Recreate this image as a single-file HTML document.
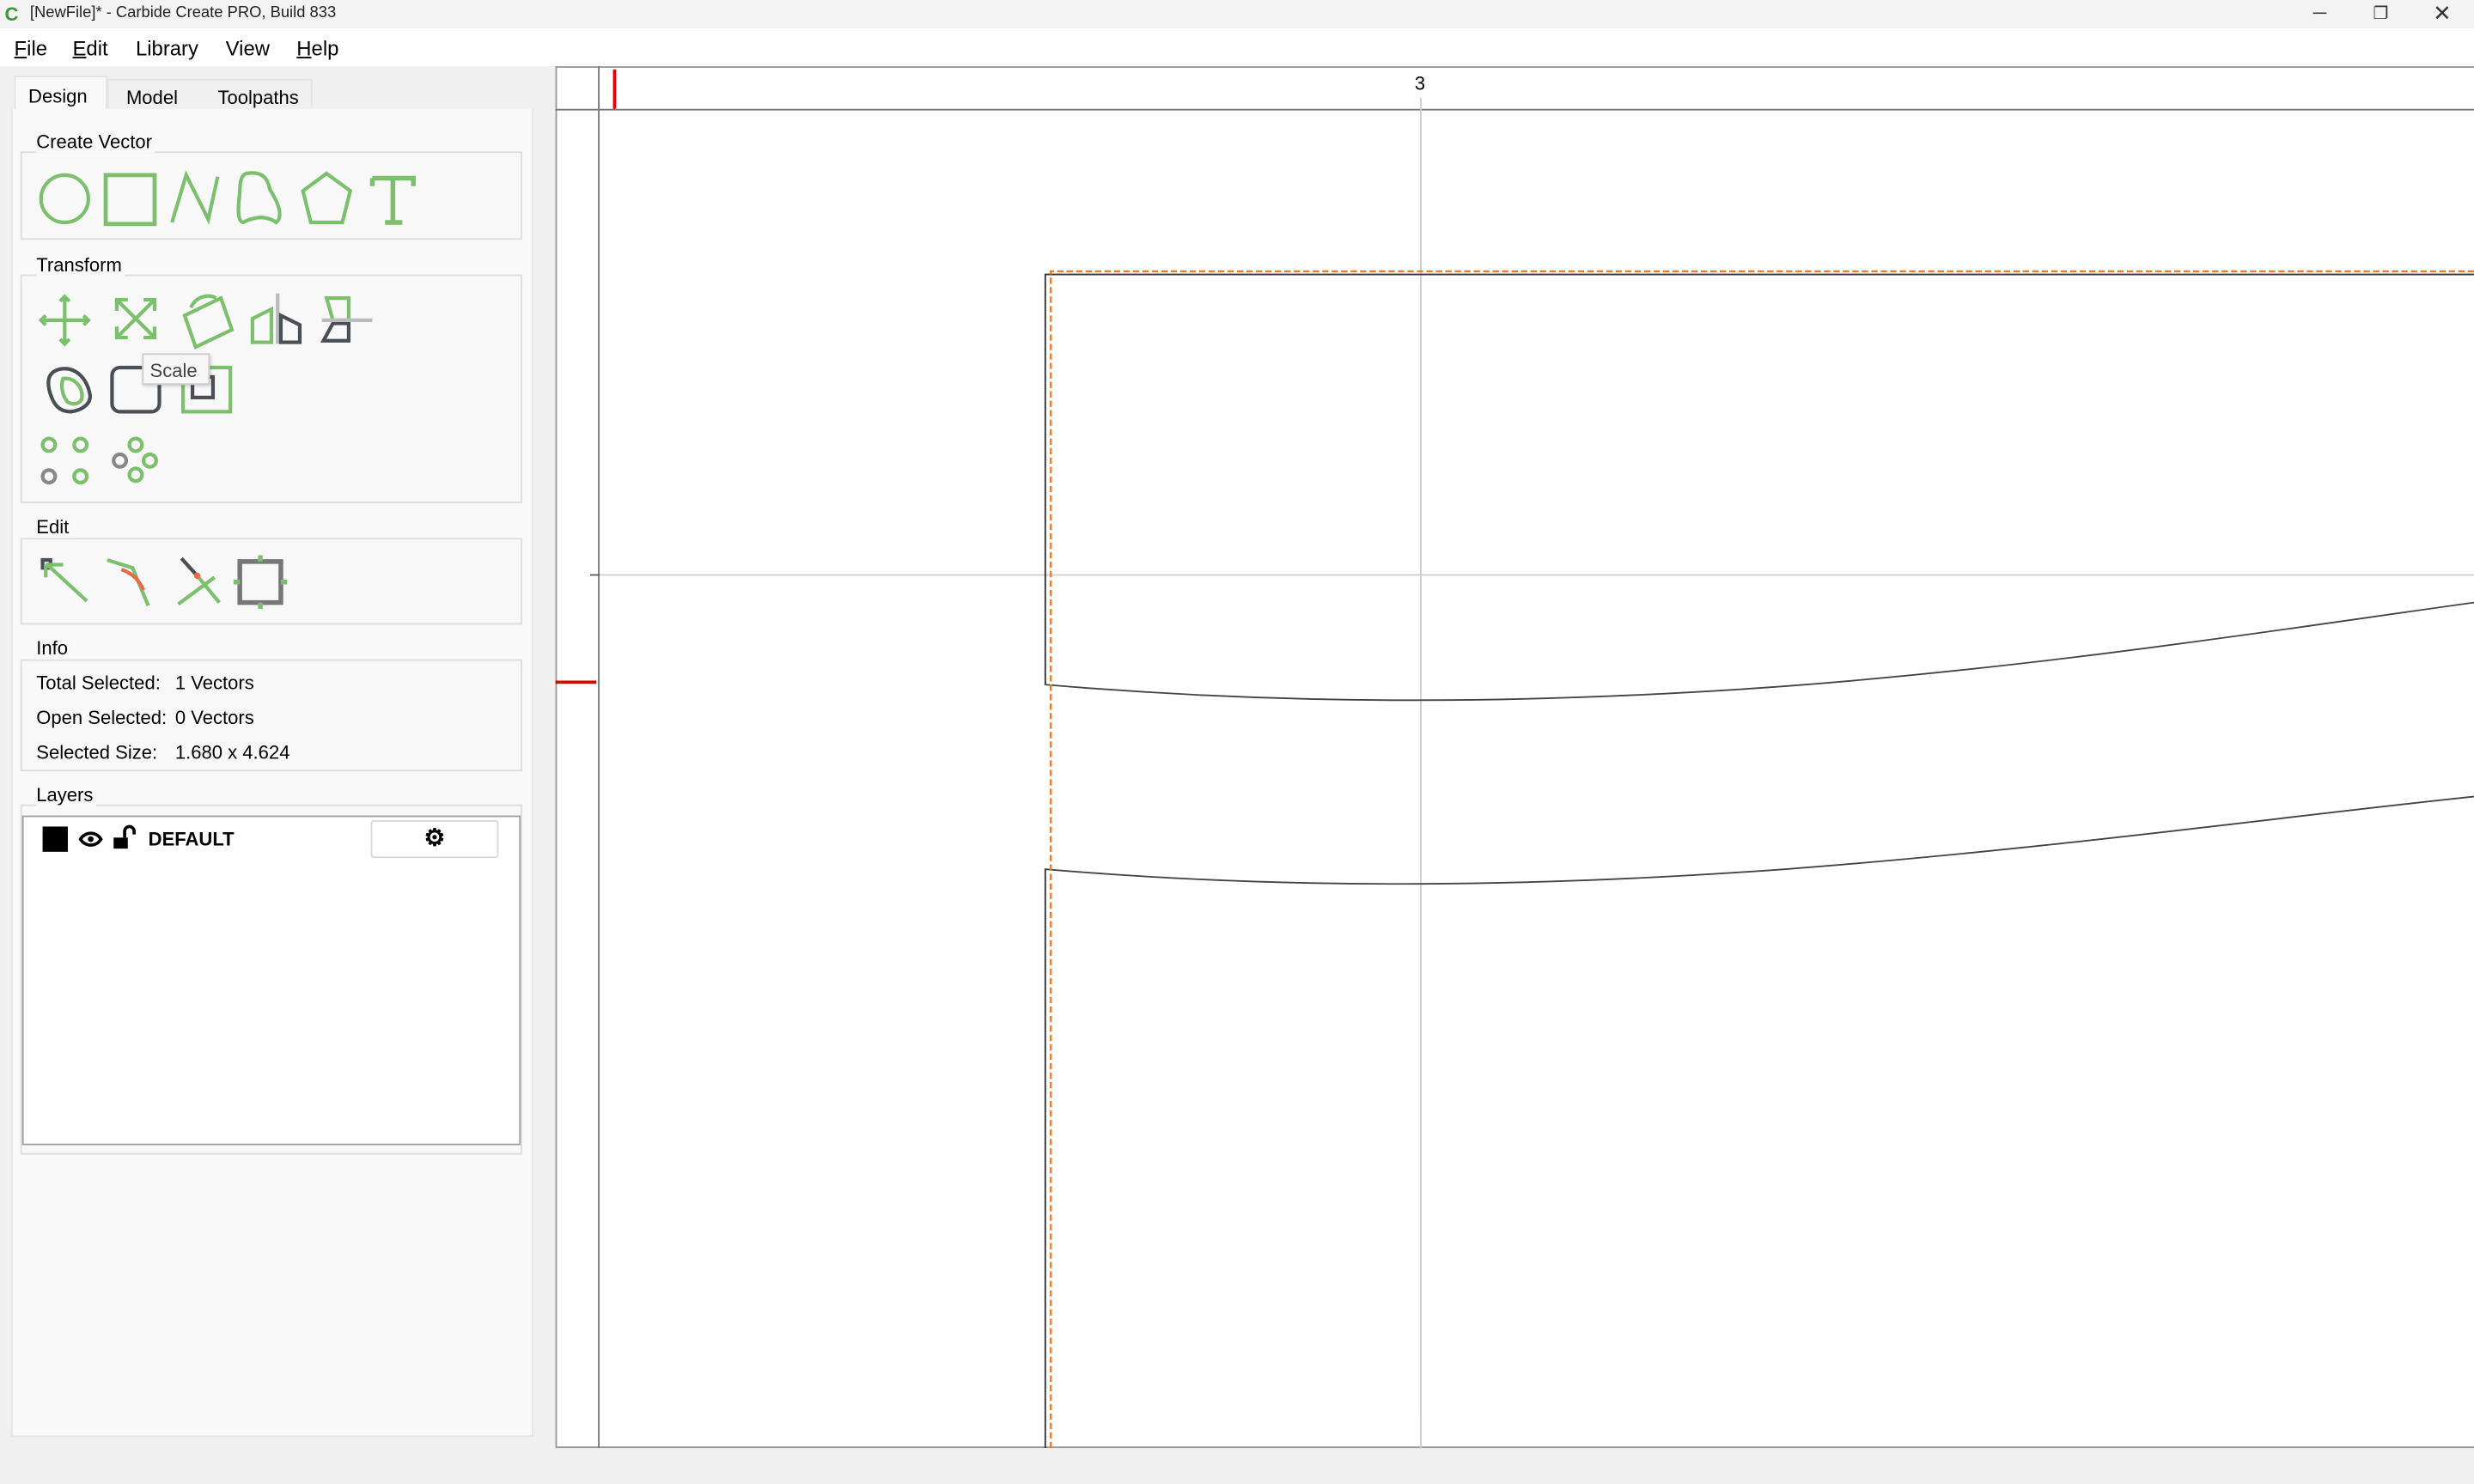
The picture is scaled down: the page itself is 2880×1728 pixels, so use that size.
<!DOCTYPE html>
<html><head><meta charset="utf-8"><style>
*{margin:0;padding:0;box-sizing:border-box}
body{width:2880px;height:1728px;overflow:hidden;background:#f0f0f0;font-family:"Liberation Sans",sans-serif}
#w{position:absolute;left:0;top:0;width:1568px;height:941px;transform:scale(1.83673);transform-origin:0 0;background:#f0f0f0}
.a{position:absolute}
.t{font-size:12px;color:#000}
.grp{position:absolute;left:13px;width:318px;border:1px solid #dcdcdc;background:#f8f8f8}
.gl{position:absolute;left:23px;font-size:12px;background:#f8f8f8;padding:0 2px 0 0}
</style></head><body><div id="w">
<div class="a" style="left:0;top:0;width:1568px;height:18px;background:#f3f3f3"></div>
<div class="a" style="left:3px;top:2px;font-size:12px;font-weight:bold;color:#3a9a3a">C</div>
<div class="a" style="left:19px;top:3px;font-size:10px;color:#222">[NewFile]* - Carbide Create PRO, Build 833</div>
<div class="a" style="left:1466px;top:1px;font-size:12px;color:#333">─</div>
<div class="a" style="left:1504px;top:2px;font-size:11px;color:#333">❐</div>
<div class="a" style="left:1542px;top:0px;font-size:14px;color:#333">✕</div>
<div class="a" style="left:0;top:18px;width:1568px;height:24px;background:#fff"></div>
<div class="a t" style="left:9px;top:23px;font-size:13px"><u>F</u>ile</div>
<div class="a t" style="left:46px;top:23px;font-size:13px"><u>E</u>dit</div>
<div class="a t" style="left:86px;top:23px;font-size:13px">Library</div>
<div class="a t" style="left:143px;top:23px;font-size:13px">View</div>
<div class="a t" style="left:188px;top:23px;font-size:13px"><u>H</u>elp</div>
<div class="a" style="left:9px;top:48px;width:59px;height:22px;background:#f9f9f9;border:1px solid #e4e4e4;border-bottom:none"></div>
<div class="a" style="left:68px;top:50px;width:130px;height:20px;border:1px solid #e4e4e4;background:#f0f0f0"></div>
<div class="a" style="left:7px;top:69px;width:331px;height:842px;background:#f9f9f9;border:1px solid #e4e4e4;border-top:none"></div>
<div class="a t" style="left:18px;top:54px">Design</div>
<div class="a t" style="left:80px;top:55px">Model</div>
<div class="a t" style="left:138px;top:55px">Toolpaths</div>
<div class="grp" style="top:96px;height:56px"></div><div class="gl" style="top:83px">Create Vector</div>
<div class="grp" style="top:174px;height:145px"></div><div class="gl" style="top:161px">Transform</div>
<div class="grp" style="top:341px;height:55px"></div><div class="gl" style="top:327px">Edit</div>
<div class="grp" style="top:418px;height:71px"></div><div class="gl" style="top:404px">Info</div>
<div class="a t" style="left:23px;top:426px">Total Selected:</div><div class="a t" style="left:111px;top:426px">1 Vectors</div>
<div class="a t" style="left:23px;top:448px">Open Selected:</div><div class="a t" style="left:111px;top:448px">0 Vectors</div>
<div class="a t" style="left:23px;top:470px">Selected Size:</div><div class="a t" style="left:111px;top:470px">1.680 x 4.624</div>
<div class="grp" style="top:510px;height:222px"></div><div class="gl" style="top:497px">Layers</div>
<div class="a" style="left:14px;top:517px;width:316px;height:209px;background:#fff;border:1px solid #a0a0a0"></div>
<div class="a" style="left:27px;top:524px;width:16px;height:16px;background:#000"></div>
<div class="a" style="left:94px;top:525px;font-size:12px;font-weight:bold">DEFAULT</div>
<div class="a" style="left:235px;top:520px;width:81px;height:24px;border:1px solid #d8d8d8;border-radius:2px;background:#fff;text-align:center;font-size:15px;line-height:22px;font-weight:bold">⚙</div>
<svg class="a" style="left:0;top:0" width="340" height="560" fill="none" stroke-width="2.3">
<g stroke="#7cc06e">
<circle cx="41" cy="126" r="15"/><rect x="67" y="111" width="31" height="31" stroke-width="2.6"/>
<path d="M163 111L171 110L137 110" stroke="none"/>
<path d="M163 111"/>
<path d="M163 111"/>
<path d="M163 111"/>
<path d="M163 111"/>
<path d="M163 111"/>
<path d="M163 111"/>
<path d="M163 111"/>
<path d="M163 111"/>
<path d="M163 111"/>
<path d="M163 111"/>
<path d="M163 111"/>
<path d="M109 141L118 111L132 139L138 112"/>
<path d="M156 110C168 108 170 115 171 120C176 128 180 137 175 141C168 136 160 138 154 141C150 140 151 130 152 122C152 115 153 111 156 110Z"/>
<path d="M207 110L222 121L217 141L197 141L192 121Z"/>
<path d="M236 113H262V118M249 113V141M244 141H255M236 113V118" stroke-width="3"/>
<path d="M26 203H56M41 188V218M29 200L26 203L29 206M53 200L56 203L53 206M38 191L41 188L44 191M38 215L41 218L44 215"/>
<path d="M74 190L98 214M98 190L74 214M74 197V190H81M91 190H98V197M74 207V214H81M91 214H98V207"/>
<path d="M117 200L140 189L147 209L124 220Z M121 195C124 188 132 186 137 189"/>
<path d="M160 217V202L172 196V217Z"/>
<path d="M207 189H221V203H211Z"/>
</g>
<path d="M176 186V218" stroke="#bbb"/><path d="M178 200L190 206V217H178Z" stroke="#4a4f55"/>
<path d="M205 216H221V205H211Z" stroke="#4a4f55"/><path d="M204 203H236" stroke="#bbb"/>
<path d="M38 234C48 232 55 240 57 250C58 256 52 260 45 261C37 261 34 256 32 250C30 244 29 236 38 234Z" stroke="#4a4f55"/>
<path d="M40 240C47 239 52 245 52 251C52 256 47 257 43 255C40 252 38 245 40 240Z" stroke="#7cc06e"/>
<rect x="71" y="233" width="30" height="28" rx="5" stroke="#4a4f55"/>
<rect x="116" y="233" width="30" height="28" stroke="#7cc06e"/><rect x="122" y="239" width="13" height="13" stroke="#4a4f55"/>
<g stroke="#7cc06e"><circle cx="31" cy="282" r="4"/><circle cx="51" cy="282" r="4"/><circle cx="51" cy="302" r="4"/><circle cx="86" cy="282" r="4"/><circle cx="95" cy="292" r="4"/><circle cx="86" cy="301" r="4"/></g>
<g stroke="#888"><circle cx="31" cy="302" r="4"/><circle cx="76" cy="292" r="4"/></g>
<path d="M27 355H32V360H27Z" stroke="#4a4f55"/><path d="M30 358L55 381M29 358H40M29 358V366" stroke="#7cc06e"/>
<path d="M68 355L84 360L94 384" stroke="#7cc06e"/><path d="M77 361C85 364 88 368 91 374" stroke="#e86a4a"/>
<path d="M115 354L125 365" stroke="#4a4f55"/><path d="M113 383L136 366M125 365L139 382" stroke="#7cc06e"/><circle cx="125" cy="365" r="2" fill="#e86a4a" stroke="none"/>
<rect x="152" y="356" width="26" height="26" stroke="#777" stroke-width="3"/>
<path d="M165 352V356M165 382V386M148 369H152M178 369H182" stroke="#7cc06e" stroke-width="3"/>
<path d="M51 532C54 527 61 527 64 532C61 537 54 537 51 532Z" stroke="#000" stroke-width="2"/><circle cx="57.5" cy="532" r="1.8" fill="#000" stroke="none"/>
<rect x="72" y="531" width="9" height="7" fill="#000" stroke="none"/><path d="M79 531V527A3 3 0 0 1 85 527V529" stroke="#000" stroke-width="2"/>
</svg>
<div class="a" style="left:90px;top:224px;width:43px;height:20px;background:#f7f7f7;border:1px solid #ccc;box-shadow:1px 1px 2px rgba(0,0,0,.2);font-size:12px;color:#444;padding:3px 0 0 4px">Scale</div>
<div class="a" style="left:352px;top:42px;width:1216px;height:876px;background:#fff;border:1px solid #999;border-right:none"></div>
<svg class="a" style="left:352px;top:42px" width="1216" height="876" fill="none">
<path d="M0 27.5H1216M27.5 0V876" stroke="#777"/>
<path d="M548.5 20V876M28 322.5H1216" stroke="#ccc"/>
<path d="M37.5 2V27" stroke="#e00000" stroke-width="2"/>
<path d="M0 390.5H26" stroke="#e00000" stroke-width="2"/>
<path d="M22 322.5H28" stroke="#555"/>
<path d="M310.5 392V132H1216M310.5 876V509" stroke="#333"/>
<path d="M310 392C450 404 600 406 780 393C950 380 1100 356 1216 340" stroke="#444"/>
<path d="M310 509C450 521 600 522 780 509C950 496 1100 475 1216 463" stroke="#444"/>
<path d="M314 876V130H1216" stroke="#f07a2a" stroke-width="1.3" stroke-dasharray="4 2"/>
<text x="548" y="15" font-size="12" text-anchor="middle" fill="#000" font-family="Liberation Sans">3</text>
</svg>
</div></body></html>
